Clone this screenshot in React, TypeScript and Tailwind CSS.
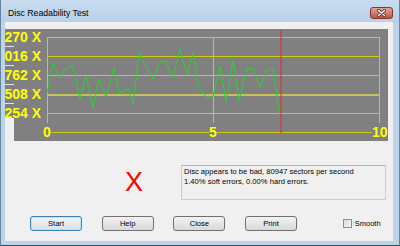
const points: [number, number][] = [
  [33, 64], [39, 34], [46, 49], [52, 39], [59, 37], [66, 71], [72, 47], [79, 79],
  [85, 50], [92, 68], [100, 39], [105, 64], [112, 61], [114, 60], [119, 75], [125, 24],
  [139, 50], [146, 33], [152, 33], [159, 49], [166, 20], [173, 45], [179, 24], [185, 59],
  [192, 68], [199, 68], [206, 37], [212, 73], [219, 31], [225, 72], [233, 39], [239, 40],
  [246, 58], [253, 42], [259, 39], [266, 88],
];

const yLabels = ['270 X', '016 X', '762 X', '508 X', '254 X'];
const gridY = [8, 27, 46, 65, 84, 103];

function Chart() {
  return (
    <div className="relative ml-[9px] mt-[7px] h-[112px] w-[374px] bg-[#808080]">
      <svg width={374} height={112} className="absolute left-0 top-0">
        {gridY.map((y) => (
          <line
            key={y}
            x1={33}
            x2={366}
            y1={y === 65 ? y + 1 : y + 0.5}
            y2={y === 65 ? y + 1 : y + 0.5}
            stroke={y === 65 ? '#c6c25c' : '#cccc10'}
            strokeWidth={y === 65 ? 2 : 1}
          />
        ))}
        {[33, 199, 365].map((x) => (
          <line key={x} x1={x + 0.5} x2={x + 0.5} y1={8} y2={95} stroke="#cccc10" strokeWidth={1} />
        ))}
        <polyline
          points={points.map((p) => p.join(',')).join(' ')}
          fill="none"
          stroke="#2bd42b"
          strokeWidth={1}
        />
        <line x1={267} x2={267} y1={1} y2={104} stroke="#e8262a" strokeWidth={1} />
      </svg>

      {/* y-axis labels sit over the plot's left margin */}
      <div className="absolute left-[-9px] top-0 h-[89px] w-[36px] bg-[#808080]">
        <div className="mt-[-1px] flex flex-col items-end">
          {yLabels.map((l) => (
            <div key={l} className="whitespace-nowrap text-[14px] font-bold leading-[19px] text-[#ffff00]">
              {l}
            </div>
          ))}
        </div>
        {[17, 36, 55, 74].map((t) => (
          <div key={t} className="absolute left-0 h-px w-[9px] bg-[#e4e4e4]" style={{ top: t }} />
        ))}
      </div>

      <div className="absolute left-[29px] top-[94px] bg-[#808080] text-[14px] font-bold leading-[18px] text-[#ffff00]">0</div>
      <div className="absolute left-[195px] top-[94px] bg-[#808080] text-[14px] font-bold leading-[18px] text-[#ffff00]">5</div>
      <div className="absolute left-[358px] top-[94px] w-[16px] bg-[#808080] text-[14px] font-bold leading-[18px] text-[#ffff00]">10</div>
    </div>
  );
}

function Btn({ label, focused }: { label: string; focused?: boolean }) {
  return (
    <button
      className={
        focused
          ? 'h-[15px] w-[52px] rounded-[3px] border border-[#3c7fb1] bg-gradient-to-b from-[#f4f6f8] to-[#dadfe4] text-[7.6px] leading-[13px] text-black shadow-[inset_0_0_0_1px_#bfe3f9]'
          : 'h-[15px] w-[52px] rounded-[3px] border border-[#707070] bg-gradient-to-b from-[#f3f3f3] to-[#d9d9d9] text-[7.6px] leading-[13px] text-black'
      }
    >
      {label}
    </button>
  );
}

export default function App() {
  return (
    <div className="flex h-[246px] w-[400px] flex-col border-x border-b border-x-[#6783a0] border-b-[#1f5266] bg-[#bcd3ea] font-['Liberation_Sans',Arial,sans-serif]">
      <div className="flex h-[22px] items-start justify-between bg-gradient-to-b from-[#c9dcf0] to-[#b9d0e9] pl-[7px] pr-[6px]">
        <div className="mt-[4px] text-[8.7px] leading-[19px] text-black">Disc Readability Test</div>
        <div className="mt-[7px] flex h-[12px] w-[23px] items-center justify-center rounded-[3px] border border-[#7a3a32] bg-gradient-to-b from-[#e3a597] to-[#c4503e]">
          <svg width={9} height={8} viewBox="0 0 9 8">
            <path d="M1.5 1.5 L7.5 6.5 M7.5 1.5 L1.5 6.5" stroke="#5a2a24" strokeWidth={3} strokeLinecap="round" />
            <path d="M1.5 1.5 L7.5 6.5 M7.5 1.5 L1.5 6.5" stroke="#ffffff" strokeWidth={1.6} strokeLinecap="round" />
          </svg>
        </div>
      </div>

      <div className="flex flex-1 pb-[4px] pl-[4px] pr-[6px]">
        <div className="flex h-[219px] w-[388px] flex-col bg-[#f0f0f0]">
          <Chart />

          <div className="mt-[24px] flex h-[35px] pl-[120px]">
            <div className="mt-[4px] w-[56px] text-[27px] leading-[27px] text-[#ff0000]">X</div>
            <div className="h-[35px] w-[205px] border border-[#cdcdcd] border-t-[#b4b4b4] px-[2px] pt-[1px] text-[7.6px] leading-[10px] text-black">
              Disc appears to be bad, 80947 sectors per second
              <br />
              1.40% soft errors, 0.00% hard errors.
            </div>
          </div>

          <div className="mt-[16px] flex h-[15px] items-center gap-[19.7px] pl-[25px]">
            <Btn label="Start" focused />
            <Btn label="Help" />
            <Btn label="Close" />
            <Btn label="Print" />
            <div className="ml-[26px] flex items-center gap-[3px]">
              <div className="h-[9px] w-[9px] border border-[#8e8f8f] bg-gradient-to-br from-[#dcdcdc] to-[#f4f4f4]" />
              <span className="text-[7.5px] leading-[10px] text-black">Smooth</span>
            </div>
          </div>
        </div>
      </div>
    </div>
  );
}
